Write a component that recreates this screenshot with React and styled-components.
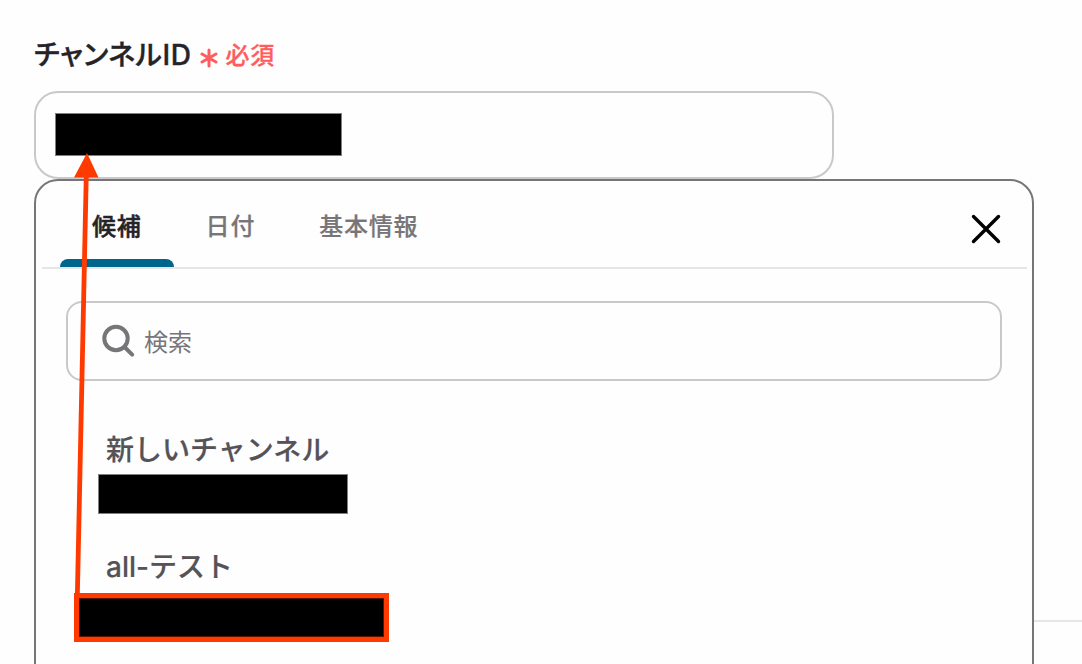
import React, { useState } from "react";
import styled, { createGlobalStyle } from "styled-components";

const GlobalStyle = createGlobalStyle`
  * {
    box-sizing: border-box;
  }

  body {
    margin: 0;
    background-color: #fefefe;
    font-family: Inter, "Noto Sans CJK JP", sans-serif;
    overflow: hidden;
  }
`;

const Page = styled.main`
  position: relative;
  width: 1082px;
  height: 664px;
  padding: 34px 0 0 34px;
  overflow: hidden;
`;

const FieldLabel = styled.label`
  display: flex;
  align-items: flex-start;
  height: 40px;
  margin-bottom: 17px;
  color: #252328;
`;

const LabelText = styled.span`
  margin-top: 1px;
  font-size: 28px;
  font-weight: 500;
  line-height: 40px;
  font-feature-settings: "palt";
  letter-spacing: 0.6px;
  -webkit-text-stroke: 0.4px currentColor;
  white-space: nowrap;
`;

const RequiredMark = styled.svg`
  width: 18px;
  height: 20px;
  margin: 14px 0 0 8px;
`;

const RequiredText = styled.span`
  margin: 4px 0 0 8px;
  color: #ff5c60;
  font-size: 24px;
  font-weight: 500;
  line-height: 36px;
  letter-spacing: 0.8px;
  -webkit-text-stroke: 0.3px currentColor;
`;

const ValueField = styled.div`
  display: flex;
  width: 800px;
  height: 88px;
  padding: 20px 19px;
  border: 2px solid #cac8cb;
  border-radius: 24px;
`;

const Redacted = styled.div`
  width: ${({ $width }) => $width}px;
  height: ${({ $height }) => $height}px;
  border: 1px solid ${({ $edge }) => $edge || "#808080"};
  background-color: #000;
`;

const DropdownRow = styled.div`
  display: flex;
  align-items: flex-start;
`;

const Dropdown = styled.section`
  width: 1000px;
  height: 520px;
  border: 2px solid #777578;
  border-radius: 24px;
  background-color: #fefefe;
`;

const SectionLine = styled.div`
  flex: 1;
  height: 443px;
  border-bottom: 2px solid #e6e6e6;
`;

const DropdownHeader = styled.header`
  display: flex;
  justify-content: space-between;
  height: 88px;
  margin: 0 5px 0 6px;
  padding: 0 25px 0 18px;
  border-bottom: 2px solid #e6e6e6;
`;

const TabList = styled.div`
  display: flex;
`;

const Tab = styled.button`
  display: flex;
  flex-direction: column;
  justify-content: space-between;
  height: 86px;
  padding: 28px 0 0;
  border: none;
  background: transparent;
  color: ${({ $active }) => ($active ? "#252328" : "#777578")};
  font-family: inherit;
  font-size: 24px;
  font-weight: 500;
  line-height: 36px;
  letter-spacing: 0.8px;
  -webkit-text-stroke: ${({ $active }) => ($active ? "0.5px" : "0.2px")} currentColor;
  cursor: pointer;

  span {
    padding: 0 32px;
  }

  &::after {
    content: "";
    width: 100%;
    height: 8px;
    border-radius: 8px 8px 0 0;
    background-color: ${({ $active }) => ($active ? "#00658c" : "transparent")};
  }
`;

const CloseButton = styled.button`
  display: flex;
  align-self: flex-start;
  margin-top: 32px;
  padding: 0;
  border: none;
  background: transparent;
  cursor: pointer;
`;

const SearchBox = styled.div`
  display: flex;
  align-items: center;
  height: 80px;
  margin: 32px 30px 0;
  padding-left: 34px;
  border: 2px solid #cac8cb;
  border-radius: 16px;
`;

const SearchInput = styled.input`
  flex: 1;
  margin-left: 8px;
  padding: 4px 0 0;
  border: none;
  outline: none;
  background: transparent;
  font-family: inherit;
  font-size: 24px;
  line-height: 36px;

  &::placeholder {
    color: #777578;
    opacity: 1;
  }
`;

const OptionList = styled.ul`
  margin: 0;
  padding: 48px 0 0 62px;
  list-style: none;
`;

const Option = styled.li`
  height: 117px;
`;

const OptionName = styled.div`
  height: 45px;
  padding-left: 8px;
  color: #555358;
  font-size: 28px;
  font-weight: 500;
  line-height: 42px;
  -webkit-text-stroke: 0.2px currentColor;
`;

const Highlight = styled.div`
  width: 315px;
  height: 49px;
  margin: 2px 0 0 -24px;
  border: 5px solid #ff3a00;
`;

const ArrowOverlay = styled.svg`
  position: absolute;
  top: 0;
  left: 0;
  pointer-events: none;
`;

const tabs = ["候補", "日付", "基本情報"];

const App = () => {
  const [activeTab, setActiveTab] = useState("候補");
  const [search, setSearch] = useState("");

  return (
    <>
      <GlobalStyle />
      <Page>
        <FieldLabel>
          <LabelText>チャンネルID</LabelText>
          <RequiredMark viewBox="0 0 18 20" fill="none" stroke="#ff5c60" strokeWidth="3" strokeLinecap="round">
            <path d="M9 2v16M2 6l14 8M16 6L2 14" />
          </RequiredMark>
          <RequiredText>必須</RequiredText>
        </FieldLabel>
        <ValueField>
          <Redacted $width={287} $height={43} />
        </ValueField>

        <DropdownRow>
          <Dropdown>
            <DropdownHeader>
              <TabList>
                {tabs.map((tab) => (
                  <Tab key={tab} $active={tab === activeTab} onClick={() => setActiveTab(tab)}>
                    <span>{tab}</span>
                  </Tab>
                ))}
              </TabList>
              <CloseButton aria-label="閉じる">
                <svg width="32" height="32" viewBox="0 0 32 32" stroke="#000" strokeWidth="3.4" strokeLinecap="round">
                  <path d="M3.5 3.5l25 25M28.5 3.5l-25 25" />
                </svg>
              </CloseButton>
            </DropdownHeader>
            <SearchBox>
              <svg width="34" height="34" viewBox="0 0 34 34" fill="none" stroke="#777578" strokeWidth="4" strokeLinecap="round">
                <circle cx="14" cy="14.5" r="11.7" />
                <path d="M23 23.5l7.2 7.2" />
              </svg>
              <SearchInput placeholder="検索" value={search} onChange={(e) => setSearch(e.target.value)} />
            </SearchBox>
            <OptionList>
              <Option>
                <OptionName>新しいチャンネル</OptionName>
                <Redacted $width={250} $height={40} />
              </Option>
              <Option>
                <OptionName>all-テスト</OptionName>
                <Highlight>
                  <Redacted $width={305} $height={39} $edge="#591400" />
                </Highlight>
              </Option>
            </OptionList>
          </Dropdown>
          <SectionLine />
        </DropdownRow>

        {/* arrow from the picked option up to the field */}
        <ArrowOverlay width="1082" height="664" viewBox="0 0 1082 664">
          <path d="M77.3 598L86.3 174" stroke="#ff3a00" strokeWidth="4.8" />
          <path d="M87 153l11.5 24.5H74z" fill="#ff3a00" />
        </ArrowOverlay>
      </Page>
    </>
  );
};

export default App;
